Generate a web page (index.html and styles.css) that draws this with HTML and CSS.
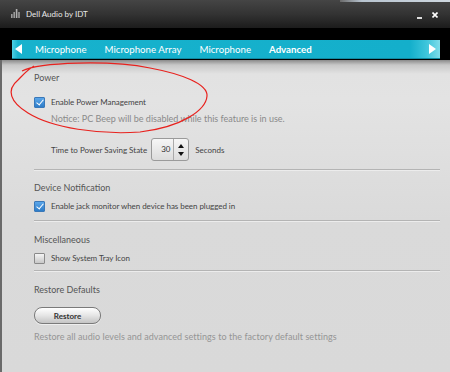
FILE: index.html
```html
<!DOCTYPE html>
<html>
<head>
<meta charset="utf-8">
<link rel="stylesheet" href="styles.css">
</head>
<body>
<div class="window">
  <div class="desk-strip"></div>
  <div class="titlebar">
    <div class="app">
      <svg class="app-icon" width="9" height="9" viewBox="0 0 9 9">
        <rect x="0" y="5" width="1.6" height="4" fill="#9a9a9a"/>
        <rect x="2.4" y="3" width="1.6" height="6" fill="#9a9a9a"/>
        <rect x="4.8" y="0" width="1.6" height="9" fill="#b0b0b0"/>
        <rect x="7.2" y="3" width="1.6" height="6" fill="#9a9a9a"/>
      </svg>
      <span class="app-title">Dell Audio by IDT</span>
    </div>
    <div class="controls">
      <span class="min"></span>
      <svg class="close" width="6" height="6" viewBox="0 0 6 6"><path d="M0.5 0.5 L5.5 5.5 M5.5 0.5 L0.5 5.5" stroke="#fff" stroke-width="1.6"/></svg>
    </div>
  </div>
  <div class="tabzone">
    <div class="tabbar">
      <span class="arrow left"></span>
      <nav class="tabs">
        <span class="tab">Microphone</span>
        <span class="tab">Microphone Array</span>
        <span class="tab">Microphone</span>
        <span class="tab active">Advanced</span>
      </nav>
      <span class="arrow right"></span>
    </div>
  </div>
  <div class="content">
    <section class="section s1">
      <div class="heading">Power</div>
      <label class="row r1"><span class="cb on"></span><span>Enable Power Management</span></label>
      <div class="notice">Notice: PC Beep will be disabled while this feature is in use.</div>
      <div class="timerow">
        <span>Time to Power Saving State</span>
        <div class="spinner">
          <span class="val">30</span>
          <span class="btns"><span class="up"></span><span class="down"></span></span>
        </div>
        <span>Seconds</span>
      </div>
    </section>
    <section class="section s2">
      <div class="heading">Device Notification</div>
      <label class="row"><span class="cb on"></span><span>Enable jack monitor when device has been plugged in</span></label>
    </section>
    <section class="section s3">
      <div class="heading">Miscellaneous</div>
      <label class="row"><span class="cb"></span><span>Show System Tray Icon</span></label>
    </section>
    <section class="section s4 last">
      <div class="heading">Restore Defaults</div>
      <button class="restore">Restore</button>
      <div class="note">Restore all audio levels and advanced settings to the factory default settings</div>
    </section>
  </div>
  <svg class="annot" width="450" height="372" viewBox="0 0 450 372">
    <path d="M22 71 C40 62, 110 60, 150 68 C182 74, 208 84, 207 96 C206 110, 182 127, 140 132 C100 135, 52 128, 28 113 C10 102, 6 90, 18 80 C23 75, 27 70, 34 66" fill="none" stroke="#e8221e" stroke-width="1.2"/>
  </svg>
</div>
</body>
</html>
```
FILE: styles.css
```css
* { box-sizing: border-box; }
html, body { margin: 0; padding: 0; }
body {
  width: 450px;
  height: 372px;
  overflow: hidden;
  font-family: "Lato", "Liberation Sans", sans-serif;
  background: #d8d8d8;
}
.window {
  position: relative;
  width: 450px;
  height: 372px;
  display: flex;
  flex-direction: column;
  background: #d9d9d9;
}
.desk-strip {
  position: absolute;
  top: 0;
  left: 340px;
  width: 110px;
  height: 2px;
  background: linear-gradient(90deg, #6a6a6a, #b8c4d0 20%, #cfd8e0);
}
.titlebar {
  height: 28px;
  flex: none;
  display: flex;
  align-items: center;
  justify-content: space-between;
  padding: 0 12px 0 11px;
  background: linear-gradient(180deg, #454545 0%, #333 50%, #1c1c1c 100%);
}
.app { display: flex; align-items: center; gap: 6px; }
.app-icon { margin-top: -1px; }
.app-title { color: #e8e8e8; font-size: 8px; }
.controls { display: flex; align-items: center; gap: 10px; padding-top: 2px; }
.min { width: 5px; height: 2px; background: #ddd; margin-top: 5px; }
.close { display: block; }
.tabzone {
  height: 32px;
  flex: none;
  background: #000;
  padding: 12px 10px 0 12px;
  display: flex;
}
.tabbar {
  flex: 1;
  height: 19px;
  display: flex;
  align-items: center;
  background: linear-gradient(90deg, #4fd0e4 0px, #17b2cd 6px, #14afcb 93%, #3fc6dc 97%, #7fdcea 100%);
  border-bottom: 1px solid #0e8aa2;
  position: relative;
}
.arrow { width: 0; height: 0; border-top: 5px solid transparent; border-bottom: 5px solid transparent; }
.arrow.left { border-right: 7px solid #fff; margin-left: 3px; }
.arrow.right { border-left: 7px solid #fff; margin-left: auto; margin-right: 4px; }
.tabs { display: flex; gap: 18px; margin-left: 13px; }
.tab { color: #fff; font-size: 9.7px; line-height: 19px; }
.tab.active { font-weight: bold; }
.content {
  flex: 1;
  padding: 0 10px 0 34px;
  background: linear-gradient(180deg, #8a8a8a 0px, #c8c8c8 5px, #e2e2e2 14px, #e3e3e3 40px, #dadada 160px, #d9d9d9 100%);
  border-left: 2px solid #6a6a6a;
  padding-left: 32px;
}
.section {
  border-bottom: 1px solid #b4b4b4;
  padding-top: 12px;
  padding-bottom: 8px;
  box-shadow: 0 1px 0 #ececec;
}
.section.last { border-bottom: none; box-shadow: none; }
.s3 { padding-top: 13px; padding-bottom: 6px; }
.s4 { padding-top: 13px; }
.heading { font-size: 9px; line-height: 12px; color: #555; }
.row { display: flex; align-items: center; gap: 6px; margin-top: 6px; height: 12px; font-size: 8px; color: #444; letter-spacing: -0.05px; }
.r1 { margin-top: 12px; }
.cb {
  width: 11px; height: 11px; flex: none;
  border: 1px solid #8a8a8a;
  border-radius: 1px;
  background: linear-gradient(180deg, #f4f4f4, #c8c8c8);
  position: relative;
}
.cb.on {
  border-color: #3a78b8;
  background: linear-gradient(180deg, #5aa6ea, #2d7cc8);
}
.cb.on::after {
  content: "";
  position: absolute;
  left: 3px; top: 0px;
  width: 3px; height: 6px;
  border-right: 1.6px solid #fff;
  border-bottom: 1.6px solid #fff;
  transform: rotate(40deg);
}
.notice { margin: 5px 0 0 17px; font-size: 9px; line-height: 12px; color: #8a8a8a; }
.timerow {
  margin: 13px 0 0 17px;
  display: flex; align-items: center; gap: 6px;
  font-size: 8px; color: #444;
}
.spinner {
  width: 38px; height: 23px;
  display: flex;
  border: 1px solid #9a9a9a;
  border-radius: 3px;
  background: linear-gradient(180deg, #f6f6f6, #dcdcdc);
  margin-left: -2px;
}
.val { flex: 1; font-size: 8px; color: #333; padding-left: 9px; line-height: 21px; border-right: 1px solid #aaa; }
.btns { width: 14px; display: flex; flex-direction: column; align-items: center; justify-content: center; gap: 4px; }
.up, .down { width: 0; height: 0; border-left: 3.5px solid transparent; border-right: 3.5px solid transparent; }
.up { border-bottom: 4px solid #111; }
.down { border-top: 4px solid #111; }
.restore {
  display: block;
  margin-top: 11px;
  width: 67px; height: 17px;
  border: 1px solid #7a7a7a;
  border-radius: 8px;
  background: linear-gradient(180deg, #ffffff, #e8e8e8 45%, #c4c4c4);
  font-family: inherit;
  font-size: 8px;
  font-weight: bold;
  color: #333;
  padding: 0;
  box-shadow: 0 1px 0 #eee;
}
.note { margin-top: 7px; font-size: 9px; line-height: 12px; color: #959595; letter-spacing: 0.05px; }
.annot { position: absolute; top: 0; left: 0; pointer-events: none; }
```
